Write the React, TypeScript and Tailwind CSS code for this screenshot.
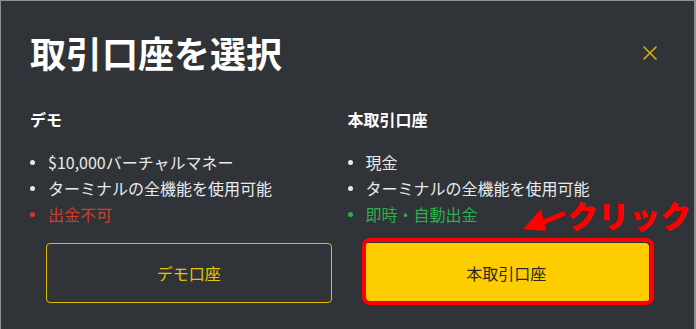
import React from "react";

const font = { fontFamily: '"Noto Sans CJK JP", "Noto Sans", sans-serif' };

function Item({ text, color, dot }: { text: string; color: string; dot: string }) {
  return (
    <li className={`flex items-center h-[26px] ${color}`}>
      <span className={`w-[5px] h-[5px] rounded-full ${dot} mr-[13px] shrink-0`} />
      <span>{text}</span>
    </li>
  );
}

export default function App() {
  return (
    <div
      style={font}
      className="relative w-[696px] h-[329px] bg-[#303337] border-t border-l border-r-2 border-[#8d9093] overflow-hidden"
    >
      <div className="flex items-center justify-between pl-[29px] pr-[36px] pt-[29px]">
        <h1 className="text-[36px] leading-[44px] font-bold text-white tracking-[0px]">取引口座を選択</h1>
        <svg width="16" height="16" viewBox="0 0 16 16" className="mt-[1px]">
          <path d="M2 2 L14 14 M14 2 L2 14" stroke="#d9b10c" strokeWidth="1.6" strokeLinecap="round" />
        </svg>
      </div>

      <div className="grid grid-cols-2 pl-[29px] pr-[29px] mt-[34px]">
        <div>
          <h2 className="text-[16px] leading-[22px] font-bold text-white">デモ</h2>
          <ul className="mt-[19px] text-[16px] leading-[26px]">
            <Item text="$10,000バーチャルマネー" color="text-[#e8eaed]" dot="bg-[#e8eaed]" />
            <Item text="ターミナルの全機能を使用可能" color="text-[#e8eaed]" dot="bg-[#e8eaed]" />
            <Item text="出金不可" color="text-[#d33c2b]" dot="bg-[#d33c2b]" />
          </ul>
          <div className="px-[16px] mt-[16px]">
            <button className="w-full h-[60px] rounded-[4px] border border-[#e0bd00] text-[#e6c300] text-[16px]">
              デモ口座
            </button>
          </div>
        </div>
        <div>
          <h2 className="text-[16px] leading-[22px] font-bold text-white">本取引口座</h2>
          <ul className="mt-[19px] text-[16px] leading-[26px]">
            <Item text="現金" color="text-[#e8eaed]" dot="bg-[#e8eaed]" />
            <Item text="ターミナルの全機能を使用可能" color="text-[#e8eaed]" dot="bg-[#e8eaed]" />
            <Item text="即時・自動出金" color="text-[#2eae4e]" dot="bg-[#2eae4e]" />
          </ul>
          <div className="px-[16px] mt-[16px]">
            <div className="relative">
              <button className="w-full h-[60px] rounded-[4px] bg-[#fdcd00] text-[#2a2a2a] text-[16px]">
                本取引口座
              </button>
              <span className="absolute -left-[2px] -top-[5px] -right-[5px] -bottom-[2px] border-[4px] border-[#ff0000] rounded-[8px] pointer-events-none" />
            </div>
          </div>
        </div>
      </div>

      <svg className="absolute left-[518px] top-[204px]" width="48" height="32" viewBox="0 0 48 32">
        <path d="M44 9 L20 19" stroke="#ff0000" strokeWidth="5" strokeLinecap="round" />
        <path d="M4 24 L22 4 L27 26 Z" fill="#ff0000" />
      </svg>
      <div className="absolute left-[566px] top-[192px] text-[31px] leading-[44px] font-black text-[#ff0000] tracking-[0px]">
        クリック
      </div>
    </div>
  );
}
